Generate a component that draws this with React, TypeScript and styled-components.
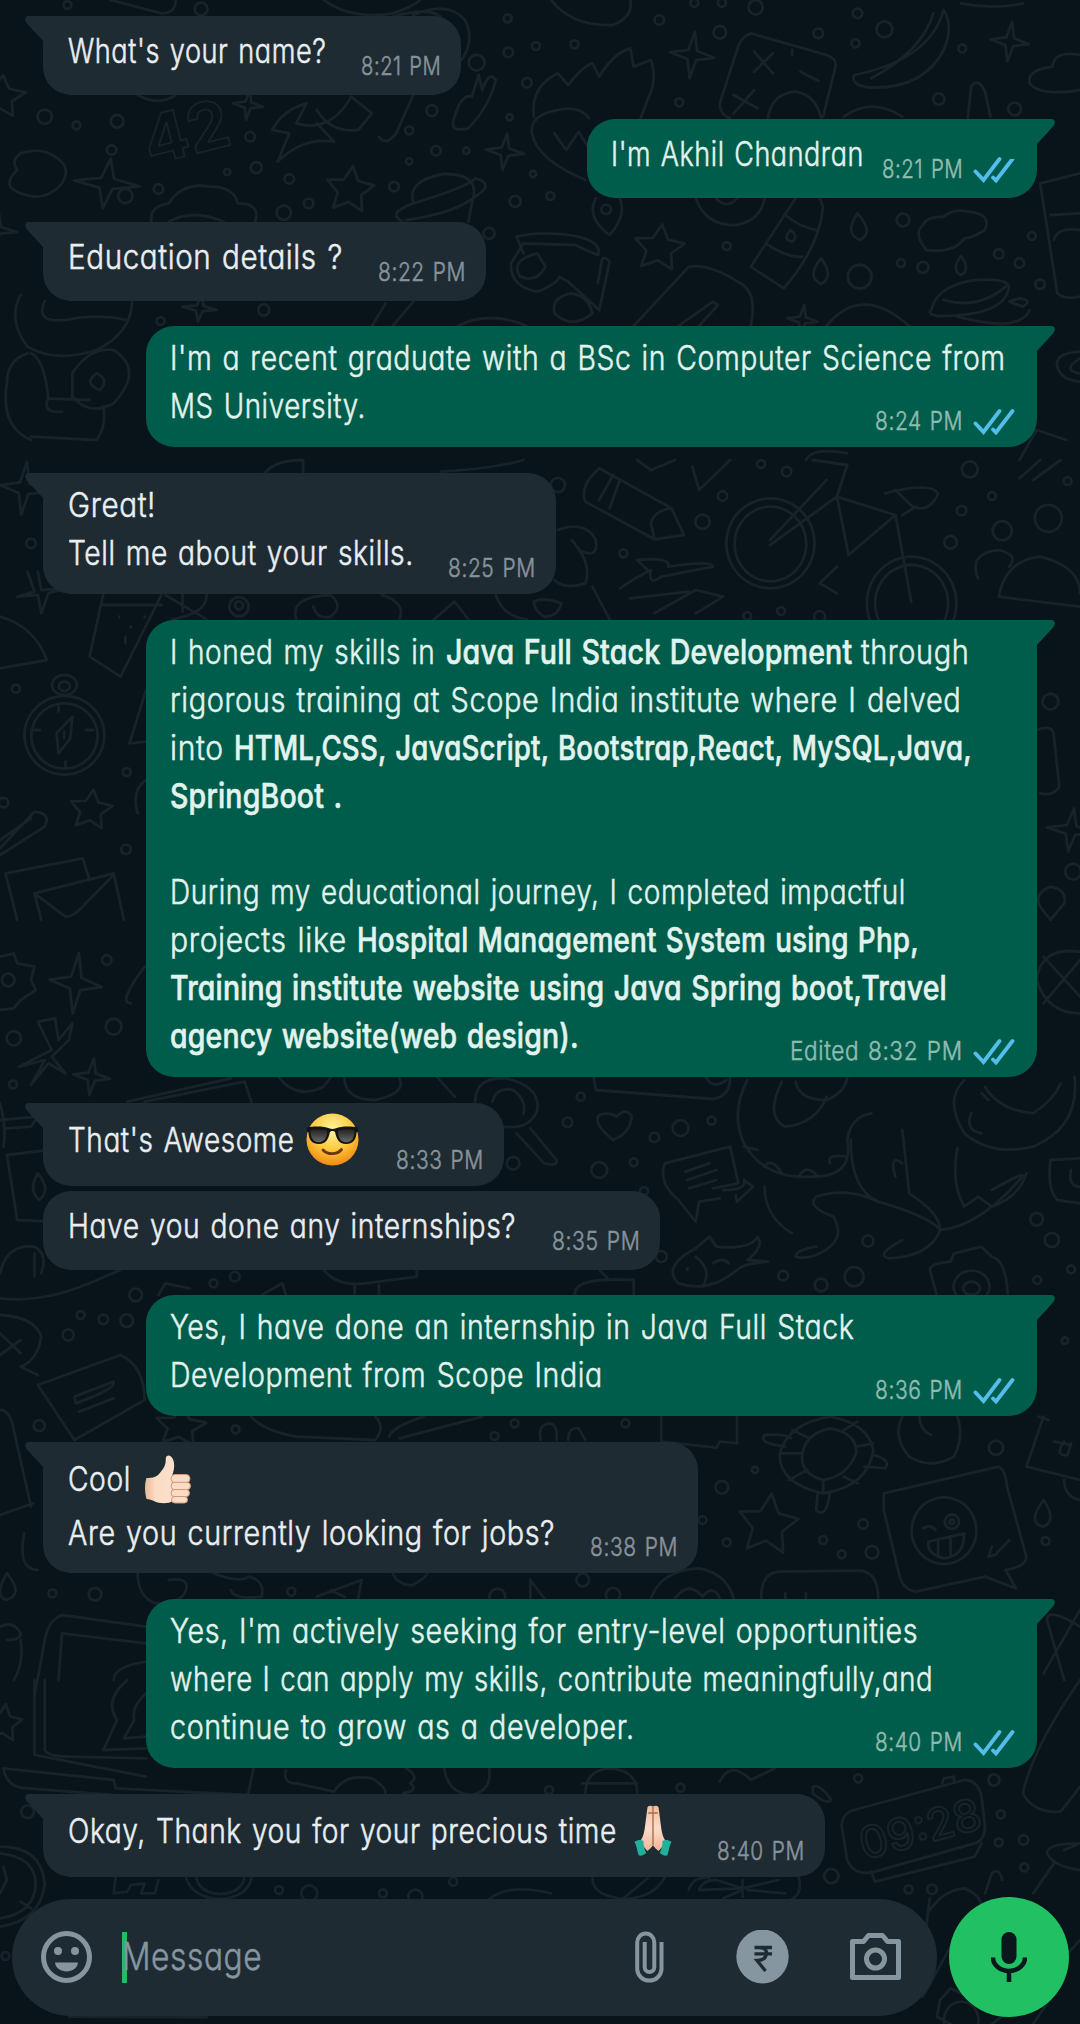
import React, { useLayoutEffect, useRef, useState } from "react";
import styled, { createGlobalStyle } from "styled-components";

const Global = createGlobalStyle`
  body { margin: 0; background: #08131a; }
  * { box-sizing: border-box; }
`;

const Screen = styled.main`
  position: relative;
  width: 1080px;
  height: 2024px;
  overflow: hidden;
  background: #08131a;
  font-family: Inter, "Open Sans", "Liberation Sans", sans-serif;
  font-feature-settings: "cv11" 1;
`;

const Wallpaper = styled.svg`
  position: absolute;
  inset: 0;
  fill: none;
  stroke: #172328;
  stroke-width: 2.8;
  stroke-linecap: round;
  stroke-linejoin: round;
  * { vector-effect: non-scaling-stroke; }
`;

const Page = styled.div`
  position: relative;
  height: 100%;
  display: flex;
  flex-direction: column;
  justify-content: space-between;
  padding: 16px 11px 7px 12px;
`;

const Thread = styled.div`
  display: flex;
  flex-direction: column;
`;

const Bubble = styled.article<{ $out?: boolean; $w: number; $h: number; $gap: number }>`
  display: grid;
  position: relative;
  width: ${(p) => p.$w}px;
  height: ${(p) => p.$h}px;
  margin-top: ${(p) => p.$gap}px;
  margin-left: 31px;
  margin-right: 32px;
  align-self: ${(p) => (p.$out ? "flex-end" : "flex-start")};
  border-radius: 28px;
  background: ${(p) => (p.$out ? "#005d4b" : "#1f2b33")};
  color: ${(p) => (p.$out ? "#e2f3ee" : "#e9eef1")};
`;

const Tail = styled.svg<{ $out?: boolean }>`
  position: absolute;
  top: 0;
  ${(p) => (p.$out ? "right: -18px;" : "left: -18px; transform: scaleX(-1);")}
  fill: ${(p) => (p.$out ? "#005d4b" : "#1f2b33")};
`;

const Body = styled.div<{ $pad: number; $out?: boolean }>`
  grid-area: 1 / 1;
  padding: ${(p) => p.$pad + 1}px 0 0 ${(p) => (p.$out ? 24 : 25)}px;
`;

const Line = styled.div<{ $lh?: number }>`
  display: flex;
  height: ${(p) => p.$lh ?? 48}px;
  line-height: 48px;
  font-size: 34px;
`;

const Meta = styled.div<{ $out?: boolean; $bottom: number }>`
  grid-area: 1 / 1;
  place-self: end;
  display: flex;
  padding: 0 ${(p) => (p.$out ? 22 : 20)}px ${(p) => p.$bottom}px 0;
  font-size: 26px;
  line-height: 30px;
  color: ${(p) => (p.$out ? "#8fbcb0" : "#87939a")};
`;

const Ticks = styled.svg`
  margin: 2px 0 0 10px;
  fill: none;
  stroke: #53bdeb;
  stroke-width: 3.8;
  stroke-linecap: round;
`;

const Slot = styled.span<{ $w: number; $ml: number }>`
  flex: none;
  display: block;
  width: ${(p) => p.$w}px;
  margin-left: ${(p) => p.$ml}px;
  white-space: pre;
`;

const Glyphs = styled.span<{ $bold?: boolean }>`
  display: inline-block;
  font-weight: ${(p) => (p.$bold ? 500 : 300)};
  -webkit-text-stroke: ${(p) => (p.$bold ? 0.6 : 0.55)}px currentColor;
  letter-spacing: ${(p) => (p.$bold ? 0.2 : 0.7)}px;
  word-spacing: 2px;
  transform-origin: 0 50%;
`;

/** Text condensed horizontally to a fixed measure. */
function Fit({ text, w, ml = 0, bold }: { text: string; w: number; ml?: number; bold?: boolean }) {
  const ref = useRef<HTMLSpanElement>(null);
  const [scale, setScale] = useState(1);
  useLayoutEffect(() => {
    if (ref.current) setScale(w / ref.current.offsetWidth);
  }, [text, w]);
  return (
    <Slot $w={w} $ml={ml}>
      <Glyphs ref={ref} $bold={bold} style={{ transform: `scaleX(${scale})` }}>{text}</Glyphs>
    </Slot>
  );
}

const EmojiSvg = styled.svg<{ $ml: number; $mt: number }>`
  flex: none;
  margin-left: ${(p) => p.$ml}px;
  margin-top: ${(p) => p.$mt}px;
  overflow: visible;
`;

const Cool = () => (
  <EmojiSvg $ml={11} $mt={-3} width="53" height="53" viewBox="0 0 53 53">
    <defs>
      <radialGradient id="face" cx=".5" cy=".3" r=".7">
        <stop offset="0" stopColor="#fff3a0" />
        <stop offset=".55" stopColor="#fdcb3f" />
        <stop offset="1" stopColor="#f08a12" />
      </radialGradient>
      <linearGradient id="lens" x1="0" y1="0" x2="0" y2="1">
        <stop offset="0" stopColor="#222" />
        <stop offset="1" stopColor="#6a6a6a" />
      </linearGradient>
    </defs>
    <circle cx="26.500" cy="26.500" r="26" fill="url(#face)" />
    <path d="M1 14.500c7-1.500 17-1.500 22 .8 2.200.8 4.800.8 7 0 5-2.300 15-2.300 22-.8l.3 3.500-1.800 1.500c-.3 6-2.600 11.500-10.500 11.500-7.300 0-9.600-5.500-10.800-11.500-.6-2-4.800-2-5.400 0C22.600 25.500 20.300 31 13 31 5 31 2.700 25.500 2.500 19.500L.7 18z" fill="#141414" />
    <path d="M4.500 17c5-1.200 12-1 16.500.8.500 6-2.500 11.500-8.200 11.500C6.600 29.300 4.500 24 4.500 17zM32 17.800C36.500 16 43.500 15.800 48.500 17c0 7-2.100 12.300-8.300 12.300-5.700 0-8.700-5.500-8.200-11.500z" fill="url(#lens)" />
    <path d="M17 37c4.500 5 14 5 18.500-.5" fill="none" stroke="#6b3508" strokeWidth="2.800" strokeLinecap="round" />
  </EmojiSvg>
);

const Thumb = () => (
  <EmojiSvg $ml={14} $mt={0} width="46" height="49" viewBox="0 0 46 49">
    <defs>
      <linearGradient id="skin" x1="0" y1="0" x2="1" y2="0">
        <stop offset="0" stopColor="#e9b795" />
        <stop offset=".35" stopColor="#fbdcc4" />
        <stop offset="1" stopColor="#fbe0cd" />
      </linearGradient>
    </defs>
    <path d="M1.500 23C7 23 11 22.500 14 19c4-5 7-8 6.800-15.500C20.800.5 24-.2 26 1.500c4.500 4.500 3.500 12.500 1.500 18L28 46c-5 3-14 2.500-18 .5-3-1.700-6-2.200-8.500-2.500C-.5 37-.5 29 1.500 23z" fill="url(#skin)" />
    <g fill="#fadbc5" stroke="#cf9a7a" strokeWidth="1">
      <rect x="26" y="19.500" width="19" height="8.200" rx="4" />
      <rect x="26" y="27.300" width="19.500" height="7.400" rx="3.700" />
      <rect x="26" y="34.500" width="18.500" height="7.200" rx="3.600" />
      <rect x="26.500" y="41.500" width="16" height="6.500" rx="3.200" />
    </g>
  </EmojiSvg>
);

const Pray = () => (
  <EmojiSvg $ml={17} $mt={-2} width="38" height="51" viewBox="0 0 40 51" preserveAspectRatio="none">
    <defs>
      <linearGradient id="palm" x1="0" y1="0" x2="0" y2="1">
        <stop offset="0" stopColor="#f1bd9f" />
        <stop offset=".5" stopColor="#fbdcc8" />
        <stop offset="1" stopColor="#eab596" />
      </linearGradient>
    </defs>
    <path d="M20 1.500C17 0 14 .5 14 3.500L11.500 22C10.500 29 9.500 32 6 37l8 9c3-2 5-4 6-6 1 2 3 4 6 6l8-9c-3.500-5-4.500-8-5.500-15L26 3.500C26 .5 23 0 20 1.500z" fill="url(#palm)" />
    <path d="M20 2v38M15 8h10" stroke="#a8694c" strokeWidth="1.400" fill="none" />
    <path d="M.5 37C4 34.500 8 34.500 10 36c0 5 1 9 3 12-3 2-5 3-8 2.500-1-3-2-6-2.500-9-.5-2-1.500-3.500-2-4.500zM39.500 37C36 34.500 32 34.500 30 36c0 5-1 9-3 12 3 2 5 3 8 2.500 1-3 2-6 2.500-9 .5-2 1.500-3.500 2-4.500z" fill="#22b09a" />
  </EmojiSvg>
);

type Run = { t: string; w: number; ml?: number; b?: boolean };
type Msg = {
  out?: boolean; w: number; h: number; gap: number; pad: number; tail?: boolean;
  lines: { runs: Run[]; lh?: number; emoji?: React.ReactNode }[];
  time: string; tw: number; bottom?: number;
};

const one = (t: string, w: number, lh?: number) => ({ runs: [{ t, w }], lh });

const messages: Msg[] = [
  { w: 418, h: 79, gap: 0, pad: 10, lines: [one("What's your name?", 258)], time: "8:21 PM", tw: 80, bottom: 14 },
  { out: true, w: 450, h: 79, gap: 24, pad: 10, lines: [one("I'm Akhil Chandran", 253)], time: "8:21 PM", tw: 81, bottom: 14 },
  { w: 443, h: 79, gap: 24, pad: 10, lines: [one("Education details ?", 275)], time: "8:22 PM", tw: 88, bottom: 14 },
  { out: true, w: 891, h: 121, gap: 25, pad: 7, lines: [one("I'm a recent graduate with a BSc in Computer Science from", 836), one("MS University.", 196)], time: "8:24 PM", tw: 88 },
  { w: 513, h: 121, gap: 26, pad: 7, lines: [one("Great!", 88), one("Tell me about your skills.", 346)], time: "8:25 PM", tw: 88 },
  {
    out: true, w: 891, h: 457, gap: 26, pad: 7,
    lines: [
      { runs: [{ t: "I honed my skills in", w: 265 }, { t: "Java Full Stack Development", w: 406, ml: 11, b: true }, { t: "through", w: 108, ml: 9 }] },
      one("rigorous training at Scope India institute where I delved", 791),
      { runs: [{ t: "into", w: 54 }, { t: "HTML,CSS, JavaScript, Bootstrap,React, MySQL,Java,", w: 738, ml: 10, b: true }] },
      { runs: [{ t: "SpringBoot .", w: 172, b: true }] },
      one(" ", 10),
      one("During my educational journey, I completed impactful", 736),
      { runs: [{ t: "projects like", w: 177 }, { t: "Hospital Management System using Php,", w: 562, ml: 10, b: true }] },
      { runs: [{ t: "Training institute website using Java Spring boot,Travel", w: 777, b: true }] },
      { runs: [{ t: "agency website(web design).", w: 409, b: true }] },
    ],
    time: "Edited 8:32 PM", tw: 173,
  },
  { w: 461, h: 83, gap: 26, pad: 12, lines: [{ runs: [{ t: "That's Awesome", w: 227 }], emoji: <Cool /> }], time: "8:33 PM", tw: 88 },
  { w: 617, h: 79, gap: 5, pad: 10, tail: false, lines: [one("Have you done any internships?", 448)], time: "8:35 PM", tw: 88, bottom: 14 },
  { out: true, w: 891, h: 121, gap: 25, pad: 7, lines: [one("Yes, I have done an internship in Java Full Stack", 684), one("Development from Scope India", 433)], time: "8:36 PM", tw: 88 },
  { w: 655, h: 131, gap: 26, pad: 12, lines: [{ runs: [{ t: "Cool", w: 63 }], emoji: <Thumb />, lh: 54 }, one("Are you currently looking for jobs?", 487)], time: "8:38 PM", tw: 88 },
  { out: true, w: 891, h: 169, gap: 26, pad: 7, lines: [one("Yes, I'm actively seeking for entry-level opportunities", 748), one("where I can apply my skills, contribute meaningfully,and", 763), one("continue to grow as a developer.", 465)], time: "8:40 PM", tw: 88 },
  { w: 782, h: 83, gap: 26, pad: 12, lines: [{ runs: [{ t: "Okay, Thank you for your precious time", w: 549 }], emoji: <Pray /> }], time: "8:40 PM", tw: 88 },
];

function Message({ m }: { m: Msg }) {
  return (
    <Bubble $out={m.out} $w={m.w} $h={m.h} $gap={m.gap}>
      {m.tail !== false && (
        <Tail $out={m.out} width="48" height="40" viewBox="0 0 48 40">
          <path d="M0 0H44.500Q48 0 47.800 4L46.500 7 30 25V40H0z" />
        </Tail>
      )}
      <Body $pad={m.pad} $out={m.out}>
        {m.lines.map((l, i) => (
          <Line key={i} $lh={l.lh}>
            {l.runs.map((r, j) => <Fit key={j} text={r.t} w={r.w} ml={r.ml} bold={r.b} />)}
            {l.emoji}
          </Line>
        ))}
      </Body>
      <Meta $out={m.out} $bottom={m.bottom ?? 11}>
        <Fit text={m.time} w={m.tw} />
        {m.out && (
          <Ticks width="42" height="27" viewBox="0 0 42 27">
            <path d="M2.500 15.500L10.500 24 26.500 3M20 21.500L23 24.500 39.500 3" />
          </Ticks>
        )}
      </Meta>
    </Bubble>
  );
}

const Composer = styled.footer`
  display: flex;
  align-items: center;
  gap: 12px;
`;

const InputBar = styled.div`
  display: flex;
  align-items: center;
  width: 925px;
  height: 117px;
  padding: 0 36px 0 29px;
  border-radius: 59px;
  background: #1f2b33;
  color: #8696a0;
`;

const Caret = styled.i`
  width: 5px;
  height: 51px;
  margin-left: 30px;
  background: #28b965;
`;

const Placeholder = styled.div`
  flex: 1;
  display: flex;
  margin: -2px 0 0 -5px;
  font-size: 38px;
  line-height: 48px;
`;

const Icon = styled.svg<{ $mr?: number }>`
  flex: none;
  display: block;
  margin-right: ${(p) => p.$mr ?? 0}px;
`;

const MicButton = styled.button`
  display: grid;
  place-items: center;
  width: 120px;
  height: 120px;
  padding: 0;
  border: 0;
  border-radius: 50%;
  background: #21c063;
`;

type Band = { top: number; dots: number[][]; sparks?: number[][]; stars?: number[][]; paths: string[] };

/* Artwork is authored on a 1568-unit-wide grid, three units per pixel vertically. */
const bands: Band[] = [
  {
    top: 0,
    dots: [[98,15,5],[292,27,8],[737,55,5],[957,60,6],[1008,8,5],[1048,8,5],[1097,22,9],[1245,40,6],[1045,97,8],[1188,100,6],[1284,88,10],[1397,145,5],[1242,130,5],[834,133,5],[778,138,5],[738,157,6],[692,188,10],[765,248,6],[986,307,5],[1363,297,7],[1473,327,8],[627,332,7],[740,352,4],[65,350,9],[111,376,5],[170,364,8],[363,410,6],[594,391,5],[633,452,6],[677,452,4],[594,484,4],[372,503,7],[330,516,4],[162,450,6],[420,537,6],[230,567,6],[182,588,9],[448,610,6],[412,638,9],[572,560,6],[774,522,4],[799,588,5],[748,604,7],[1311,660,8],[1055,738,5],[1498,708,5],[1480,789,6],[1308,789,5],[1340,802,7],[1248,830,15],[1510,853,6],[1450,762,6],[383,930,7],[233,963,5],[880,628,6],[710,700,7]],
    sparks: [[1005,165,32,70],[1466,125,28,60],[360,315,22,45],[155,550,48,75],[733,455,28,55],[290,925,25,40],[-5,690,30,50],[1165,960,22,45]],
    stars: [[0,290,38,65],[508,570,36,72],[957,745,38,72]],
    paths: [
      "M800 0Q830 80 890 75Q920 50 915 0", "M1395 10Q1440 30 1485 10", "M160 0L235 40Q255 40 255 0M470 0Q510 60 570 40Q600 20 610 0",
      "M600 45Q650 0 675 60Q690 120 670 180M570 50Q620 20 640 50",
      "M1370 30Q1350 180 1240 225Q1235 255 1260 262Q1340 270 1370 150Q1385 80 1370 30M1355 40Q1340 150 1265 235",
      "M1090 100L1200 165Q1215 175 1213 200L1195 350M1090 100Q1075 110 1070 150L1045 310Q1045 345 1060 355M1095 155L1122 220M1122 160L1095 215M1065 285L1100 325M1095 270L1065 340M1162 215L1188 242M1150 150V165",
      "M1115 355Q1120 280 1155 275Q1185 285 1192 355M1225 350Q1265 290 1310 350M1405 357L1410 260Q1420 230 1430 275L1438 350",
      "M1568 165Q1530 150 1528 200Q1490 210 1495 250Q1510 290 1568 270",
      "M775 350Q770 260 810 220L825 255Q845 200 860 190L870 230Q890 160 915 145L920 200L945 180Q955 240 940 300L930 355",
      "M855 355Q840 310 800 335Q770 350 772 400Q780 480 850 540M805 400L822 450 840 395 852 435",
      "M660 350Q650 400 680 385Q710 320 720 240Q710 210 700 270L695 225L685 290Q670 280 660 350",
      "M395 390Q410 330 445 310L430 370Q480 400 510 290M395 390L420 400 403 485Q440 410 485 425L460 370M460 330Q480 400 520 390L540 340 510 290M550 410Q560 440 575 400L600 285M200 285Q230 320 255 285",
      "M30 460Q60 440 80 470Q105 500 90 550Q65 610 30 580Q0 560 25 510Q15 480 30 460",
      "M220 668Q215 620 245 610Q265 545 305 560Q340 560 345 610Q380 610 370 668M245 665Q280 625 325 665",
      "M600 610Q590 540 645 522Q700 520 685 610L680 665M585 665Q560 640 600 610Q680 560 690 535Q720 550 690 590Q660 640 590 660",
      "M865 595Q850 650 885 705Q910 650 900 595M1010 595Q1025 680 1070 675Q1105 660 1110 595M1040 595Q1055 630 1070 595",
      "M1155 595L1090 800 1138 865Q1190 740 1195 620L1190 595M1140 645Q1160 680 1185 690M1115 735Q1145 775 1165 770M1148 690Q1135 720 1150 725Q1160 710 1148 690",
      "M1245 640Q1225 700 1248 720Q1270 700 1245 640M1192 775Q1170 830 1192 852Q1212 830 1192 775M1395 768Q1380 810 1395 825Q1410 810 1395 768",
      "M1370 650Q1385 625 1405 635Q1440 640 1430 690Q1410 715 1400 715Q1385 760 1345 750Q1325 700 1340 675Q1345 650 1370 650",
      "M750 710Q790 690 840 710Q875 730 868 765Q850 750 835 735L760 730L742 790Q740 860 780 875Q810 850 812 830L825 845L870 930L885 785Q875 760 873 790L868 850M750 710L760 760M780 760Q740 780 755 830Q780 850 792 800ZM830 880Q800 890 805 940Q830 990 860 940Q855 890 830 880",
      "M920 978L1000 800Q1030 790 1075 850Q1100 880 1090 978M985 978L1035 905 1042 915 1015 978M665 978Q710 930 765 978M1200 978Q1250 850 1320 978",
      "M1352 930Q1360 860 1410 842Q1460 830 1465 860Q1460 950 1360 948Q1345 940 1352 930M1370 900Q1420 930 1460 860M1465 905L1485 920Q1500 900 1480 895L1465 905M1390 950Q1480 1000 1495 930",
      "M1568 520L1510 550L1535 880Q1545 900 1568 890M1525 645L1568 640M1568 690Q1535 680 1530 720",
      "M30 885Q10 960 40 1040Q80 1090 140 1050Q190 1000 192 905M65 903Q50 970 95 960Q140 940 185 960M40 1060Q10 1080 10 1150Q0 1280 45 1320M45 1060Q65 1080 70 1195L130 1200M70 1195Q60 1240 90 1235M45 1310L140 1320Q155 1280 150 1220M105 1120Q130 1040 165 1050Q210 1110 165 1210Q130 1250 105 1190ZM140 1120Q120 1150 145 1170Q160 1140 140 1120",
      "M1568 1055Q1530 1060 1535 1100Q1540 1140 1568 1145M1568 1075Q1540 1110 1568 1120M540 978L560 910M570 978L600 905M1480 1380L1505 1290 1548 1320M1170 1380Q1180 1340 1230 1360",
    ],
  },
  {
    top: 460,
    dots: [[1105,12,5],[1142,35,6],[1408,28,10],[1550,63,5],[1049,108,6],[1020,185,9],[1396,152,6],[1440,108,5],[1380,247,8],[905,280,5],[810,75,9],[1455,212,12],[1522,175,17],[45,250,6],[1134,453,5],[1085,468,5],[1190,470,7],[347,440,12],[347,436,5],[23,686,5],[184,936,5],[183,1168,6],[1525,725,10],[1558,1235,10],[5,1028,6]],
    sparks: [[35,85,35,80],[1555,1110,35,65]],
    stars: [[132,1050,32,62]],
    paths: [
      "M640 35Q720 25 760 0M385 38Q400 0 440 0V35M925 0L945 30 980 0M1005 20L1015 90 1060 0",
      "M870 25L975 145 993 225 950 238 850 125Q840 80 870 25M890 45L870 120M900 60L885 145M975 145Q950 150 945 190L950 235",
      "M1118 115A64 135 0 1 0 1119 115M1118 140A52 112 0 1 0 1119 140M1323 290A65 140 0 1 0 1324 290M1323 315A53 115 0 1 0 1324 315",
      "M1118 255L1215 110 1230 15 1180 0M1215 110L1300 165 1232 285 1215 110M1118 240L1200 60M1300 165L1323 425M1285 100Q1350 65 1362 100Q1350 160 1325 140L1300 90M1215 320L1190 370 1215 400M1310 165L1330 140",
      "M900 385Q925 350 945 330Q940 380 960 350L1035 320Q1035 300 970 320Q975 290 925 300L940 330M915 415L1000 395M950 460L1010 390 1050 410 1010 460M1420 355Q1405 280 1450 270Q1480 285 1465 320M1450 410Q1460 300 1510 290Q1568 320 1568 400M1450 410L1568 440M1480 55L1510 0M1500 60L1540 0",
      "M810 210Q850 180 865 240Q870 300 840 270M830 240Q860 310 850 370Q820 390 805 360M720 405Q730 470 765 478M860 380L885 478M775 425Q790 410 815 430Q810 470 790 470Q775 450 775 425",
      "M430 478Q420 410 480 405Q500 440 480 470Q460 480 455 440M555 405Q590 430 580 478M630 478L660 425 680 478M240 405L300 478M265 402V455M300 405Q300 460 250 478",
      "M40 335L50 395 25 410 55 405 60 460 70 400 95 385 60 390 55 335M150 402L130 590 175 650 235 402M150 435H235M182 530V550M173 470V472M190 500V502M210 470V472",
      "M0 470Q50 500 68 600L0 625M93 645A18 30 0 1 0 94 645M93 665A8 14 0 1 0 94 665M93 708A58 118 0 1 0 94 708M93 730A48 98 0 1 0 94 730M105 770L82 820 85 880 102 835ZM93 815V835M85 735V755M125 810H135M50 810H58M95 905V920",
      "M212 690L188 850 212 845M0 1165L50 1055Q75 1060 65 1100L0 1185M0 1140L45 1075M212 960Q190 990 200 1060",
      "M8 1240L120 1195 130 1260M8 1240L25 1380M50 1300L165 1240 180 1380M50 1300L95 1370Q105 1370 115 1350L165 1245M50 1300L60 1380",
      "M1505 810Q1530 790 1530 830L1538 980Q1530 1010 1510 1000M1525 1280Q1500 1300 1510 1340L1525 1380 1545 1330Q1550 1290 1525 1280",
    ],
  },
  {
    top: 900,
    dots: [[155,180,6],[165,380,10],[20,415,9],[19,553,5],[843,590,5],[824,667,6],[988,684,10],[1033,662,5],[950,712,6],[870,810,10],[920,787,5],[745,790,8],[935,873,5],[1505,958,8],[1527,1020,9],[1260,1023,7],[1137,1127,6],[1240,1130,12],[1192,1155,8],[1506,1140,5],[1555,1108,5],[341,1130,6],[310,1150,5],[197,1185,8],[117,1245,5],[150,1258,6],[184,1262,8],[99,1305,7],[1546,1322,4],[960,1070,7],[12,240,8]],
    sparks: [[110,250,38,92],[133,530,27,55]],
    paths: [
      "M0 170L20 160 25 190 50 200 45 240 52 270 30 300 20 325 0 330M55 365L80 355 85 420 105 370 100 420 75 470 95 520 70 490 45 555 65 480 28 500 75 450ZM190 310Q170 310 210 200",
      "M1568 155Q1510 140 1505 240Q1520 340 1568 340M1515 170L1568 290M1568 180L1515 310",
      "M185 605L335 535M210 605L355 545 365 605M405 532Q430 600 470 560L480 532M500 532Q500 600 545 600Q590 580 580 535M635 532L660 590",
      "M690 605Q690 530 735 535Q785 560 780 630Q770 690 730 680M715 605Q720 560 745 570Q765 600 760 640M750 700L790 790Q810 800 808 780L770 685",
      "M862 532L865 570 1035 597Q1060 590 1060 532M1025 532Q1035 570 1055 540M890 720Q860 670 870 645Q885 635 895 650Q910 620 917 650Q915 700 890 720",
      "M1085 540Q1060 640 1080 730Q1110 840 1180 830Q1240 830 1230 720Q1235 650 1265 640M1135 545Q1110 650 1140 680Q1185 670 1200 590M1155 545Q1160 600 1200 600Q1225 580 1230 535M1080 740L1100 750M1110 800Q1120 770 1135 820M1160 830Q1170 790 1185 825M1205 790Q1200 760 1230 770",
      "M1235 720Q1235 870 1275 905Q1350 950 1365 990Q1350 1070 1290 1075Q1270 1065 1310 1020M1275 905Q1230 860 1185 890Q1170 920 1210 950Q1230 1020 1190 1060Q1170 1080 1155 1070Q1155 1050 1185 1040M1310 790Q1290 760 1300 830M1310 690L1320 880Q1365 940 1365 990Q1420 980 1480 840Q1500 800 1440 870M1110 860Q1110 950 1150 1000",
      "M1400 540Q1370 600 1400 700Q1440 770 1500 740Q1568 680 1560 530M1410 640Q1400 690 1425 700M1390 745Q1380 850 1400 920L1420 890 1440 920Q1480 890 1490 820M1430 560Q1450 630 1500 640Q1530 600 1540 550M1425 580L1435 600",
      "M965 790L1060 740 1072 850 1035 865M965 790Q955 850 985 900L1010 965 1015 905 1045 895M995 815L1030 790M998 840L1040 810M1000 865L1040 840M1050 870Q1085 870 1080 840L1093 860 1070 905 1068 885",
      "M985 1150Q960 1100 1010 1045L1030 1010 1040 1040Q1090 1050 1100 1010Q1110 1040 1085 1080L1115 1085Q1080 1090 1070 1110Q1030 1180 985 1150M1010 1070Q1035 1110 1020 1160M1035 1090Q1050 1070 1058 1090M998 1105V1110",
      "M1360 1185L1350 1110Q1350 1090 1380 1085L1385 1060 1425 1040 1440 1070Q1460 1080 1463 1180M1410 1112A26 48 0 1 0 1411 1112M1410 1145A12 20 0 1 0 1411 1145",
      "M1568 775L1525 780Q1520 870 1535 900L1568 910M1555 810Q1550 860 1568 860M835 1185Q830 1130 920 1140V1185M870 1110L885 1140",
      "M0 660L55 650 45 680 10 685M10 765L70 750M10 765L25 960 75 965M55 820Q40 870 57 900Q75 870 55 820M0 610Q10 680 5 740M0 1120Q10 1030 50 1040Q70 1060 60 1120M50 1060V1130M0 1195Q60 1210 130 1150L180 1105M470 1110Q490 1160 530 1150L605 1130V1110M515 1160V1185M550 1155V1185M230 1185L240 1150 275 1165M380 1185L410 1150 415 1185",
    ],
  },
  {
    top: 1280,
    dots: [[57,437,7],[342,448,5],[747,430,5],[718,468,5],[908,430,5],[1446,503,9],[1096,570,4],[1048,622,8],[1020,720,5],[1055,787,5],[1253,732,6],[1195,780,5],[1222,823,5],[1266,817,8],[1518,783,5],[76,940,5],[138,943,8],[423,935,5],[846,900,8],[890,945,9],[722,950,10],[1382,725,9],[1382,725,3]],
    stars: [[262,440,38,62],[1115,735,45,95]],
    paths: [
      "M0 105Q50 110 60 170Q55 240 30 260L55 285M0 160L30 220M0 225L30 180M0 390Q15 390 20 450L45 680M0 705L48 670",
      "M55 315L175 225Q210 260 210 360L108 480ZM108 350L165 305Q170 325 110 370ZM115 395L165 355",
      "M365 410Q380 450 430 470L545 480Q560 440 545 410M565 470Q570 440 615 410M580 475L700 410M785 480Q780 430 800 430Q810 440 808 480M825 480Q825 440 840 445L850 480M960 410V485L1040 503 1045 485 1070 490V412",
      "M1205 410Q1260 430 1268 510Q1260 620 1195 640Q1130 610 1132 520Q1145 430 1205 410M1205 445Q1245 460 1243 520Q1230 590 1195 600Q1160 580 1165 520Q1170 460 1205 445M1150 450L1175 475M1132 520H1163M1145 600L1172 570M1195 600V640M1225 590L1245 610M1243 500L1268 490M1225 450L1245 425M1140 500Q1100 490 1110 465Q1140 460 1148 475M1268 525Q1295 540 1285 565Q1260 560 1255 560M1187 640L1185 690Q1200 720 1205 635",
      "M1310 410Q1295 470 1320 530Q1350 570 1385 530Q1400 470 1390 410M1335 410Q1335 450 1352 465",
      "M1515 410L1490 560 1568 600M1530 485L1555 495M1545 485Q1530 530 1550 525L1555 490M1508 410L1522 420M1515 660Q1490 730 1515 740Q1535 720 1515 660M35 760Q25 870 55 870M10 880Q-10 950 10 960Q35 940 10 880M1568 660Q1545 650 1545 600",
      "M1283 640L1450 560Q1460 570 1462 620L1490 830Q1490 860 1460 870L1475 925 1430 890 1330 935Q1310 930 1305 880L1283 690ZM1370 652A47 100 0 1 0 1371 652M1340 745Q1350 730 1358 750M1348 785L1400 760Q1400 830 1370 835Q1345 820 1348 785M1362 785V830M1380 775V825M1440 800L1435 830 1445 825 1465 780",
      "M200 880Q200 950 225 970Q265 970 270 930Q275 890 245 900M310 880Q350 910 360 890Q385 900 380 950Q340 960 335 930M460 950L525 900 520 955M480 930L500 950M570 880Q580 920 600 915Q620 890 620 880M770 955V900L790 955M945 955Q960 870 1015 865Q1055 880 1065 955M980 955Q1000 900 1020 950Q1035 910 1045 955M1105 955Q1105 880 1130 875L1250 872Q1275 880 1275 955M1140 940V955M1170 940V955",
      "M212 1040L90 1005Q70 1020 65 1080L50 1250M212 1090L90 1060L85 1200M0 1040Q20 1020 30 1060Q30 1080 10 1080M30 1080Q35 1150 20 1200M212 1145Q165 1160 165 1200M1568 990L1515 1180M1568 1040Q1520 980 1520 1020L1545 1200",
    ],
  },
  {
    top: 1680,
    dots: [[1246,295,5],[1443,300,7],[988,323,5],[1453,403,5],[1450,487,5],[1486,480,6],[1487,562,5],[1207,588,9],[1319,628,5],[1353,628,6],[658,605,5],[405,630,5],[449,640,10],[556,640,5],[40,395,8],[8,828,5],[797,330,5],[603,650,9]],
    stars: [[5,130,28,58]],
    paths: [
      "M50 0V225L212 290M65 0V210Q70 230 100 230L212 235M5 265L165 300 168 325 360 345 368 265M5 265Q10 325 40 325L165 345M212 40Q190 80 195 120L180 175 212 170M185 0Q150 60 170 120L150 210 212 205",
      "M415 270Q410 310 430 310L485 335Q500 280 540 295Q560 320 560 340M590 265Q610 290 595 310Q610 330 585 340M645 265Q650 340 685 345Q715 330 710 265M845 310H925M850 340Q850 270 885 265Q925 270 925 340M1045 305Q1060 240 1090 300L1125 265M1180 320Q1190 310 1207 360Q1200 375 1180 340Z",
      "M1240 390L1400 300Q1420 300 1425 350L1430 440Q1430 480 1415 490L1270 575Q1240 590 1230 540L1222 440Q1222 400 1240 390M1265 575L1270 605 1415 530 1425 490M1368 310L1370 295 1385 290V305",
      "M1568 0Q1500 200 1485 340Q1500 400 1540 395L1568 320M1568 490Q1520 490 1520 520Q1530 560 1568 570M1530 550L1500 640M1350 655Q1345 720 1345 760M1430 640L1440 580Q1450 560 1455 600M1350 690Q1370 630 1400 625Q1430 650 1425 700M1568 490L1545 510",
      "M0 500Q60 500 65 610Q60 720 0 740M0 520Q50 530 52 610Q50 700 0 715M5 560L10 600 0 640M30 665L45 685M168 590L165 640 185 635 190 615 210 610 205 640 225 640 230 600M270 593Q280 655 320 657Q360 650 365 593M285 593Q290 640 320 642Q350 640 355 593M710 657Q740 610 800 640M860 593Q860 650 910 657Q950 650 965 593M905 655L940 595",
      "M1000 630Q1005 590 1030 593M1160 593Q1165 640 1150 657M1015 630Q1020 600 1040 600L1078 625ZM1078 600V650M1078 625L1130 600M1078 630L1050 655M1085 630L1140 640",
      "M100 1010L300 1012M1365 960L1380 925 1400 945 1420 930M1365 960L1360 1010 1380 1032M1395 965A25 55 0 1 0 1396 965M1440 1032L1500 940M1530 940L1500 1032M1510 790Q1530 770 1550 820L1568 780M1380 800L1340 950",
    ],
  },
];

const ringPath = (n: number, inner: number, [cx, cy, rx, ry]: number[]) =>
  Array.from({ length: n * 2 }, (_, i) => {
    const k = i % 2 ? inner : 1;
    const a = (i * Math.PI) / n - Math.PI / 2 + 0.12;
    return `${i ? "L" : "M"}${cx + Math.cos(a) * rx * k} ${cy + Math.sin(a) * ry * k}`;
  }).join("") + "Z";

const Doodles = () => (
  <Wallpaper width="1080" height="2024" viewBox="0 0 1080 2024" aria-hidden="true">
    {bands.map((b) => (
      <g key={b.top} transform={`translate(0 ${b.top}) scale(.6888 .33333)`}>
        {b.dots.map(([x, y, r], i) => <ellipse key={i} cx={x} cy={y} rx={r * 1.15} ry={r * 2.38} />)}
        {b.sparks?.map((s, i) => <path key={i} d={ringPath(4, 0.28, s)} />)}
        {b.stars?.map((s, i) => <path key={i} d={ringPath(5, 0.5, s)} />)}
        {b.paths.map((d, i) => <path key={i} d={d} />)}
      </g>
    ))}
    <text x="150" y="165" fontSize="66" fontWeight="700" strokeWidth="2" transform="rotate(-14 150 165)">42</text>
    <text x="864" y="1860" fontSize="44" fontWeight="500" strokeWidth="2" transform="rotate(-15 864 1860)">09:28</text>
  </Wallpaper>
);

export default function App() {
  return (
    <Screen>
      <Global />
      <Doodles />
      <Page>
        <Thread>
          {messages.map((m, i) => <Message key={i} m={m} />)}
        </Thread>
        <Composer>
          <InputBar>
            <Icon width="51" height="52" viewBox="0 0 51 52">
              <ellipse cx="25.500" cy="26" rx="23" ry="23.500" fill="none" stroke="currentColor" strokeWidth="5" />
              <circle cx="17" cy="20" r="4" fill="currentColor" />
              <circle cx="34" cy="20" r="4" fill="currentColor" />
              <path d="M14 31.500H37C36.500 37 31.500 40.500 25.500 40.500S14.500 37 14 31.500z" fill="currentColor" />
            </Icon>
            <Caret />
            <Placeholder><Fit text="Message" w={140} /></Placeholder>
            <Icon $mr={72} width="29" height="53" viewBox="0 0 29 53" fill="none" stroke="currentColor" strokeWidth="4">
              <path d="M26.500 11V38.500A12.200 12.200 0 0 1 2.200 38.500V11.500A8.500 9 0 0 1 19.300 11.500V36A4.800 5 0 0 1 9.700 36V11" />
            </Icon>
            <Icon $mr={61} width="53" height="55" viewBox="0 0 53 55">
              <ellipse cx="26.500" cy="26.500" rx="26.200" ry="27" fill="currentColor" />
              <path d="M18.500 17.500H36M18.500 23.800H36M19 17.500H24Q30.500 18 30.500 23.500Q30 30 21 30.500L29.500 41" fill="none" stroke="#1f2b33" strokeWidth="3.300" />
            </Icon>
            <Icon width="51" height="48" viewBox="0 0 51 48" fill="none" stroke="currentColor" strokeWidth="5" strokeLinejoin="round">
              <path d="M2.500 8.500H13.500L18.500 2.500H32.500L37.500 8.500H48.500V44.500H2.500z" />
              <circle cx="25.500" cy="26" r="9" />
            </Icon>
          </InputBar>
          <MicButton aria-label="Record">
            <Icon width="36" height="50" viewBox="0 0 36 50">
              <rect x="10.500" y="0" width="15" height="32" rx="7.500" fill="#0a171c" />
              <path d="M2 25.500A16 13.500 0 0 0 34 25.500M18 39V50" fill="none" stroke="#0a171c" strokeWidth="4.500" />
            </Icon>
          </MicButton>
        </Composer>
      </Page>
    </Screen>
  );
}
